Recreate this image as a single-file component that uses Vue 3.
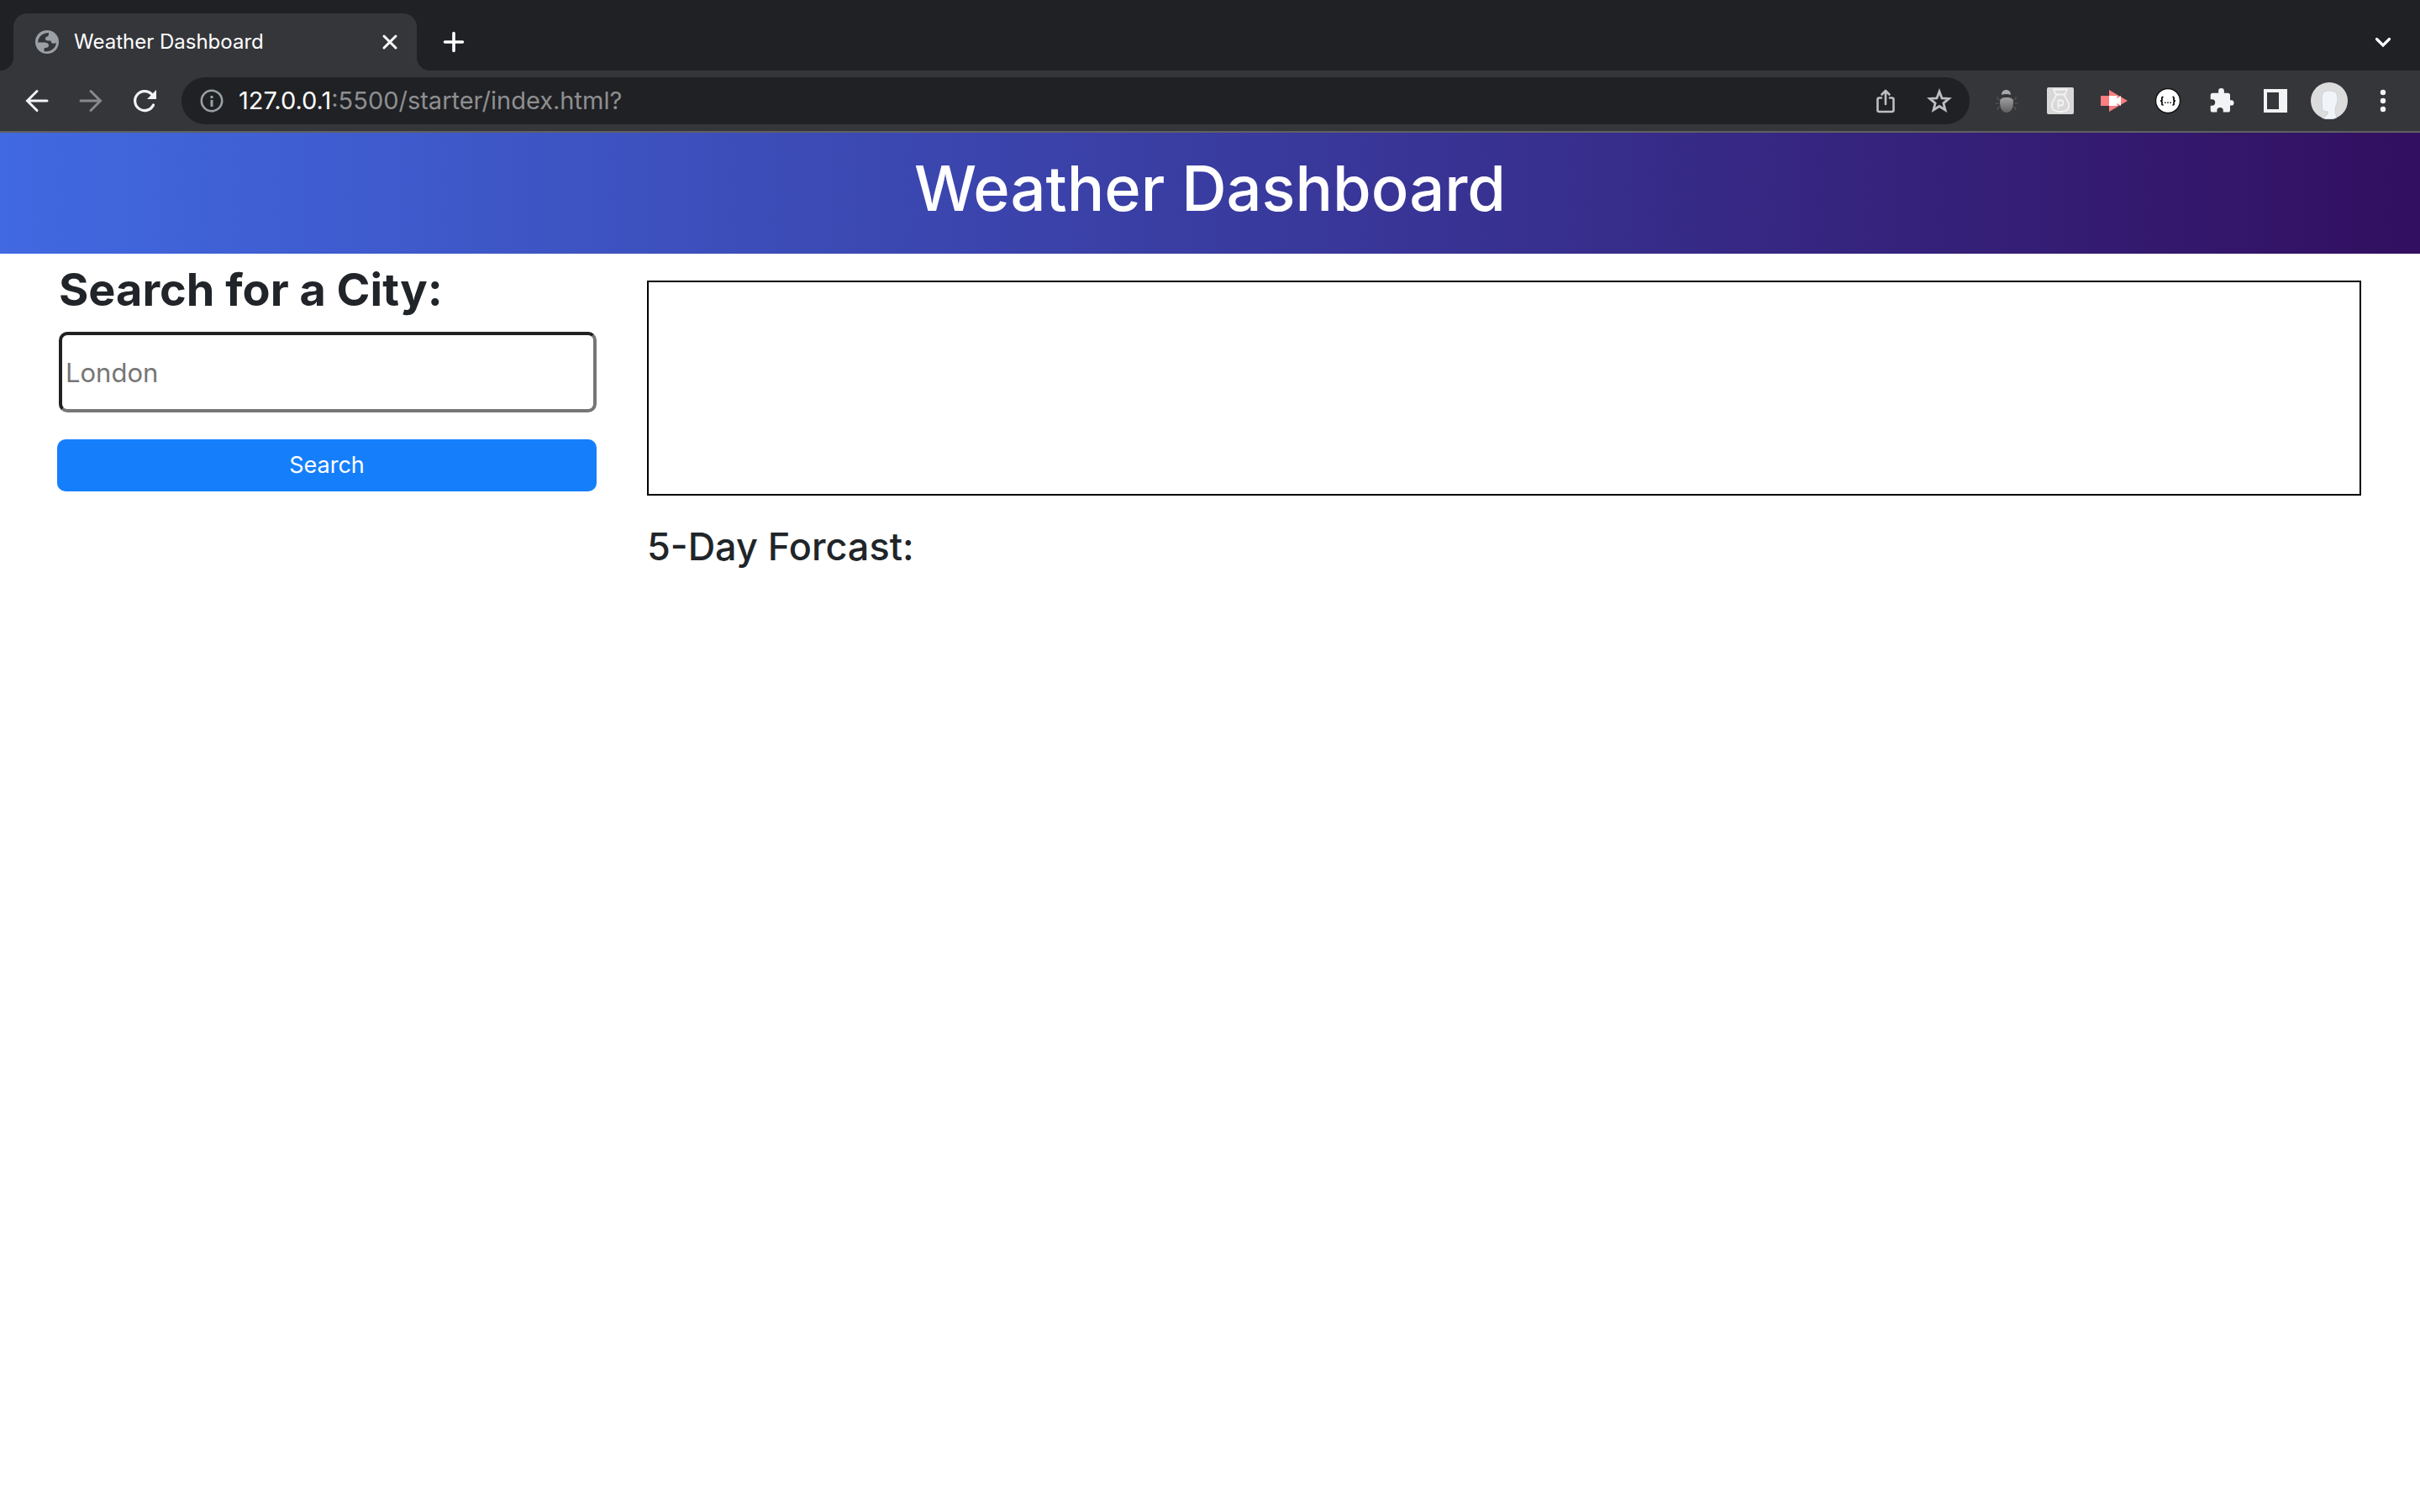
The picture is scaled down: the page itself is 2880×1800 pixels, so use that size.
<script setup>
import { ref } from 'vue'

const city = ref('')
</script>

<template>
  <div class="window">
    <div class="tab-strip">
      <div class="tab">
        <svg class="icon" viewBox="0 0 32 32" aria-hidden="true">
          <circle cx="16" cy="16" r="14" fill="#9aa0a6" />
          <path d="M18 5C10.500 5 5.200 10 5.200 16.500H12c3.500 0 6 1 6 3.500 0 2.300-1.500 3-4 3-1.200 0-1.500.5-1.500 1.500V27c7 1.500 14-3 14.500-10.500-1 1.300-2.300 1.500-3.500 1.300-2.500-.3-2.700-1.500-3-3.300h-3.500c-2 0-3-.8-3-2.500 0-2 1.500-2.500 3-2.700C17.500 9 18 7.500 18 5z" fill="#35363a" />
        </svg>
        <span class="tab-title">Weather Dashboard</span>
        <button class="icon-btn" aria-label="Close tab">
          <svg class="icon" viewBox="0 0 32 32"><path d="M9 9l14 14M23 9L9 23" stroke="#fff" stroke-width="3" stroke-linecap="round" /></svg>
        </button>
      </div>
      <button class="icon-btn" aria-label="New tab">
        <svg class="icon" viewBox="0 0 32 32"><path d="M16 5.500v21M5.500 16h21" stroke="#fff" stroke-width="3.600" stroke-linecap="round" /></svg>
      </button>
      <button class="icon-btn tab-search" aria-label="Search tabs">
        <svg class="icon" viewBox="0 0 32 32"><path d="M8.500 12.500l7.500 7.500 7.500-7.500" fill="none" stroke="#fff" stroke-width="3.200" stroke-linecap="round" /></svg>
      </button>
    </div>

    <div class="toolbar">
      <nav class="nav-buttons">
        <button class="icon-btn" aria-label="Back">
          <svg class="icon" viewBox="0 0 32 32"><path d="M28 16H5M16 4.500L4.500 16 16 27.500" fill="none" stroke="#f1f3f4" stroke-width="3" stroke-linecap="round" /></svg>
        </button>
        <button class="icon-btn" aria-label="Forward">
          <svg class="icon" viewBox="0 0 32 32"><path d="M4 16h23M16 4.500L27.500 16 16 27.500" fill="none" stroke="#88898b" stroke-width="3" stroke-linecap="round" /></svg>
        </button>
        <button class="icon-btn" aria-label="Reload">
          <svg class="icon" viewBox="0 0 32 32">
            <path d="M26.500 21A11.500 11.500 0 1 1 24.500 8.200" fill="none" stroke="#f1f3f4" stroke-width="3.200" stroke-linecap="round" />
            <path d="M30 3v11H19z" fill="#f1f3f4" />
          </svg>
        </button>
      </nav>

      <div class="omnibox">
        <svg class="icon" viewBox="0 0 32 32" aria-hidden="true">
          <circle cx="16" cy="16" r="12.200" fill="none" stroke="#9aa0a6" stroke-width="2.600" />
          <path d="M14.500 10h3v3h-3zM14.500 15h3v8h-3z" fill="#9aa0a6" />
        </svg>
        <span class="url"><span class="host">127.0.0.1</span>:5500/starter/index.html?</span>
        <button class="icon-btn" aria-label="Share this page">
          <svg class="icon" viewBox="0 0 32 32" fill="none" stroke="#bdbebf" stroke-width="2.600" stroke-linecap="round" stroke-linejoin="round">
            <path d="M11 12.500H8.500a2 2 0 0 0-2 2V27a2 2 0 0 0 2 2h15a2 2 0 0 0 2-2V14.500a2 2 0 0 0-2-2H21M16 20V4.500M11.500 8.500L16 4l4.500 4.500" />
          </svg>
        </button>
        <button class="icon-btn" aria-label="Bookmark this tab">
          <svg class="icon" viewBox="0 0 32 32">
            <path d="M16 5l3 7.800 8.400.6-6.500 5.400 2.100 8.200-7-4.500L9 27l2.100-8.200-6.500-5.400 8.400-.6z" fill="none" stroke="#bdbebf" stroke-width="2.800" />
          </svg>
        </button>
      </div>

      <div class="extensions">
        <button class="icon-btn" aria-label="Bug extension">
          <svg class="icon" viewBox="0 0 32 32">
            <defs>
              <linearGradient id="bug" x1="0" y1="0" x2="0" y2="1">
                <stop offset="0" stop-color="#a0a0a0" />
                <stop offset="1" stop-color="#606062" />
              </linearGradient>
            </defs>
            <path d="M8 15l-3-1.500V11M7 19H2.500M8 23l-2.500 1.500V27M24 15l3-1.500V11M25 19h4.500M24 23l2.500 1.500V27" fill="none" stroke="#55565a" stroke-width="1.200" />
            <path d="M10 9c0-4 2.500-6 5.500-6S21 5 21 9c-3-1.300-8-1.300-11 0z" fill="#a9a9a9" />
            <path d="M8 17c0-4 3.500-5 8-5s8 1 8 5c0 8-3 13-8 13S8 25 8 17z" fill="url(#bug)" />
          </svg>
        </button>
        <button class="icon-btn" aria-label="Pouch extension">
          <svg class="icon" viewBox="0 0 32 32">
            <rect width="32" height="32" rx="2" fill="#d9d8d8" />
            <g fill="none" stroke="#f6f3f3" stroke-width="1.800" stroke-linejoin="round">
              <path d="M8 2.500h16l-2.500 6h-11zM11 9c0 4-5 6-5 12.500C6 27 9 29 16 29s10-2 10-7.500C26 15 21 13 21 9" />
              <path d="M13.500 25v-9.500h3a3 3 0 0 1 0 6h-3" />
            </g>
          </svg>
        </button>
        <button class="icon-btn" aria-label="Video extension">
          <svg class="icon" viewBox="0 0 32 32">
            <path d="M0 10h10V3l22 13-22 13v-7H0z" fill="#fc7e80" />
            <path d="M10 10h9.500v3.500l4.500-3.500v12l-4.500-3.500V22H10z" fill="#fff" />
          </svg>
        </button>
        <button class="icon-btn" aria-label="JSON extension">
          <svg class="icon" viewBox="0 0 32 32">
            <circle cx="16" cy="16" r="14.500" fill="#fff" stroke="#111" stroke-width="1.400" />
            <path d="M10.500 11.500c-2.500 0-1.500 2-1.500 3s-.8 1.700-2 1.700c1.200 0 2 .8 2 1.800s-1 3 1.500 3M21.500 11.500c2.500 0 1.500 2 1.500 3s.8 1.700 2 1.700c-1.200 0-2 .8-2 1.800s1 3-1.500 3" fill="none" stroke="#111" stroke-width="1.800" />
            <path d="M12 17.500h1.500V19H12zM15.200 17.500h1.500V19h-1.500zM18.400 17.500h1.500V19h-1.500z" fill="#111" />
          </svg>
        </button>
        <button class="icon-btn" aria-label="Extensions">
          <svg class="icon" viewBox="0 0 32 32">
            <path d="M27.300 15.200h-1.300V9.500a2.700 2.700 0 0 0-2.700-2.700h-4.400V4.500a3.400 3.400 0 0 0-6.800 0v2.300H5.400a2.700 2.700 0 0 0-2.700 2.700v4.800h1.800a3.700 3.700 0 0 1 0 7.400H2.700v5.200a2.700 2.700 0 0 0 2.700 2.700h5v-1.900a3.700 3.700 0 0 1 7.400 0v1.900h5.500a2.700 2.700 0 0 0 2.700-2.700V21.600h1.300a3.200 3.200 0 0 0 0-6.400z" fill="#f1f3f4" />
          </svg>
        </button>
        <button class="icon-btn" aria-label="Side panel">
          <svg class="icon" viewBox="0 0 32 32"><path d="M2 2h28v28H2zM6 6v20h14V6z" fill="#f1f3f4" fill-rule="evenodd" /></svg>
        </button>
        <button class="icon-btn" aria-label="Profile">
          <svg class="avatar" viewBox="0 0 44 44">
            <circle cx="22" cy="22" r="22" fill="#dcdcdc" />
            <path d="M13 19c0-7 3-9 9.500-9S32 13 32 20c0 6-3 8-3 13 0 4 1.500 6 1.500 9.200-6 2.300-11 2.300-17 0 4-1 6.500-3 7-7.200-6 0-6.500-1.500-7-5z" fill="#f1f5f9" stroke="#ccd3da" stroke-width="1" />
          </svg>
        </button>
        <button class="icon-btn" aria-label="Menu">
          <svg class="icon" viewBox="0 0 32 32" fill="#f1f3f4"><circle cx="16" cy="6" r="3.200" /><circle cx="16" cy="16" r="3.200" /><circle cx="16" cy="26" r="3.200" /></svg>
        </button>
      </div>
    </div>

    <header class="hero">
      <h1>Weather Dashboard</h1>
    </header>

    <div class="content">
      <aside>
        <form class="search-form" @submit.prevent>
          <label for="search-input">Search for a City:</label>
          <input id="search-input" v-model="city" type="text" placeholder="London" />
          <button class="search-button" type="submit">Search</button>
        </form>
      </aside>
      <main>
        <section class="today" aria-label="Today"></section>
        <h2>5-Day Forcast:</h2>
      </main>
    </div>
  </div>
</template>

<style>
body {
  background: #fff;
}
</style>

<style scoped>
* {
  box-sizing: border-box;
}

.window {
  font-family: Inter, "Liberation Sans", sans-serif;
  color: #212529;
}

.icon-btn {
  display: flex;
  flex: none;
  align-items: center;
  justify-content: center;
  width: 32px;
  height: 32px;
  padding: 0;
  border: 0;
  background: none;
}

.icon {
  display: block;
  flex: none;
  width: 32px;
  height: 32px;
}

.avatar {
  display: block;
  flex: none;
  width: 44px;
  height: 44px;
}

.tab-strip {
  display: flex;
  align-items: center;
  gap: 28px;
  padding: 16px 28px 0 16px;
  background: #202124;
}

.tab {
  position: relative;
  display: flex;
  align-items: center;
  gap: 16px;
  width: 480px;
  height: 68px;
  padding: 0 16px 0 24px;
  border-radius: 16px 16px 0 0;
  background: #35363a;
}

.tab::before,
.tab::after {
  content: "";
  position: absolute;
  bottom: 0;
  width: 16px;
  height: 16px;
}

.tab::before {
  right: 100%;
  background: radial-gradient(circle at 0 0, #202124 16px, #35363a 16px);
}

.tab::after {
  left: 100%;
  background: radial-gradient(circle at 100% 0, #202124 16px, #35363a 16px);
}

.tab-title {
  flex: 1;
  font-size: 24px;
  line-height: 32px;
  white-space: nowrap;
  color: #fff;
}

.tab-search {
  margin-left: auto;
}

.toolbar {
  display: flex;
  align-items: center;
  gap: 28px;
  padding: 8px 28px;
  border-bottom: 2px solid #5f6063;
  background: #35363a;
}

.nav-buttons,
.extensions {
  display: flex;
  gap: 32px;
}

.omnibox {
  display: flex;
  flex: 1;
  align-items: center;
  gap: 32px;
  height: 56px;
  padding: 0 20px;
  border-radius: 28px;
  background: #202124;
}

.url {
  flex: 1;
  margin-left: -16px;
  font-size: 29px;
  line-height: 36px;
  white-space: nowrap;
  color: #8e8f91;
}

.host {
  color: #fff;
}

.hero {
  padding: 18px 0 30px;
  background: linear-gradient(to right, #4169e1, #320f60);
}

h1 {
  margin: 0;
  font-size: 74px;
  font-weight: 500;
  line-height: 96px;
  text-align: center;
  color: #fff;
}

.content {
  display: grid;
  grid-template-columns: 107fr 340fr;
  gap: 60px;
  padding: 0 70px 0 68px;
}

.search-form {
  display: flex;
  flex-direction: column;
}

label {
  padding: 7px 2px 14px;
  font-size: 54px;
  font-weight: 700;
  line-height: 72px;
  white-space: nowrap;
}

input {
  height: 96px;
  margin-left: 2px;
  padding: 2px 4px;
  border: 4px solid;
  border-color: #212123 #767676 #767676 #212123;
  border-radius: 10px;
  background: #fff;
  font: 31px/48px Inter, "Liberation Sans", sans-serif;
  color: #212529;
}

input::placeholder {
  color: #757575;
  opacity: 1;
}

.search-button {
  height: 62px;
  margin-top: 32px;
  padding: 0;
  border: 0;
  border-radius: 10px;
  background: #157ffb;
  font: 27px/40px Inter, "Liberation Sans", sans-serif;
  color: #fff;
}

.today {
  height: 256px;
  margin-top: 32px;
  border: 2px solid #000;
}

h2 {
  margin: 32px 0 0;
  font-size: 45px;
  font-weight: 500;
  line-height: 58px;
}
</style>
